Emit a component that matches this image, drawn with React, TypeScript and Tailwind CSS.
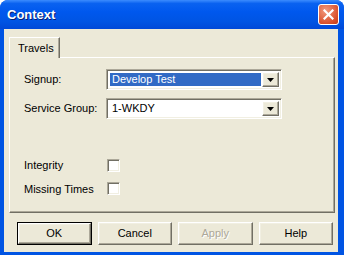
import React from 'react'

const raised =
  'border border-t-white border-l-white border-r-[#716f64] border-b-[#716f64] shadow-[inset_-1px_-1px_0_#aca899,inset_1px_1px_0_#f1efe2]'
const sunken =
  'border border-t-[#aca899] border-l-[#aca899] border-r-white border-b-white shadow-[inset_1px_1px_0_#716f64,inset_-1px_-1px_0_#f1efe2]'

function Arrow() {
  return (
    <svg width="7" height="4" viewBox="0 0 7 4">
      <path d="M0 0h7L3.5 4z" fill="#000" />
    </svg>
  )
}

function Combo({ value, selected }: { value: string; selected?: boolean }) {
  return (
    <div className={`flex h-[21px] w-[176px] bg-white p-[2px] ${sunken}`}>
      <div className="flex flex-1 items-center p-[1px]">
        <div
          className={`flex h-full flex-1 items-center pl-[2px] ${
            selected ? 'bg-[#316ac5] text-white' : 'text-black'
          }`}
        >
          {value}
        </div>
      </div>
      <div className={`flex w-[17px] items-center justify-center bg-[#ece9d8] ${raised}`}>
        <Arrow />
      </div>
    </div>
  )
}

function Check() {
  return <div className={`h-[13px] w-[13px] bg-white ${sunken}`} />
}

function Button({ label, isDefault, disabled }: { label: string; isDefault?: boolean; disabled?: boolean }) {
  return (
    <div className={`h-[23px] w-[75px] ${isDefault ? 'border border-black' : ''}`}>
      <div
        className={`flex h-full items-center justify-center bg-[#ece9d8] ${raised} ${
          disabled ? 'text-[#aca899] [text-shadow:1px_1px_0_#fff]' : 'text-black'
        }`}
      >
        {label}
      </div>
    </div>
  )
}

export default function App() {
  return (
    <div className="flex h-[255px] w-[344px] flex-col overflow-hidden rounded-t-[8px] bg-[#0054e3] font-['Liberation_Sans',Arial,sans-serif] text-[11px] text-black">
      {/* title bar */}
      <div className="flex h-[29px] shrink-0 items-center justify-between bg-[linear-gradient(#3c8cfe_0%,#0a62f0_12%,#0058ee_40%,#0054e3_75%,#0048d8_100%)] pl-[7px] pr-[5px]">
        <span className="text-[13px] font-bold text-white [text-shadow:1px_1px_0_#0a1e6e]">Context</span>
        <div className="flex h-[21px] w-[21px] items-center justify-center rounded-[3px] border border-white bg-[radial-gradient(circle_at_35%_30%,#f29a7e,#d9502c_70%,#c23a16)]">
          <svg width="11" height="11" viewBox="0 0 11 11">
            <path d="M1.5 1.5l8 8M9.5 1.5l-8 8" stroke="#fff" strokeWidth="2.2" strokeLinecap="square" />
          </svg>
        </div>
      </div>

      {/* body */}
      <div className="ml-[4px] mr-[6px] mb-[3px] flex flex-1 flex-col bg-[#ece9d8] px-[5px] pt-[8px]">
        <div className="flex">
          <div className="relative z-10 -mb-[1px] flex h-[21px] w-[51px] items-center border border-b-0 border-t-white border-l-white border-r-[#716f64] bg-[#ece9d8] pl-[8px] shadow-[inset_-1px_0_0_#aca899]">
            Travels
          </div>
        </div>
        <div className="flex h-[156px] w-[326px] flex-col border border-t-white border-l-white border-r-[#716f64] border-b-[#716f64] shadow-[inset_-1px_-1px_0_#aca899] pl-[14px] pt-[11px]">
          <div className="flex items-center">
            <span className="w-[82px]">Signup:</span>
            <Combo value="Develop Test" selected />
          </div>
          <div className="mt-[8px] flex items-center">
            <span className="w-[82px]">Service Group:</span>
            <Combo value="1-WKDY" />
          </div>
          <div className="mt-[38px] flex items-center">
            <span className="w-[83px]">Integrity</span>
            <Check />
          </div>
          <div className="mt-[7px] flex items-center">
            <span className="w-[83px]">Missing Times</span>
            <Check />
          </div>
        </div>
        <div className="mt-[9px] flex gap-[6px] pl-[8px]">
          <Button label="OK" isDefault />
          <Button label="Cancel" />
          <Button label="Apply" disabled />
          <Button label="Help" />
        </div>
      </div>
    </div>
  )
}
